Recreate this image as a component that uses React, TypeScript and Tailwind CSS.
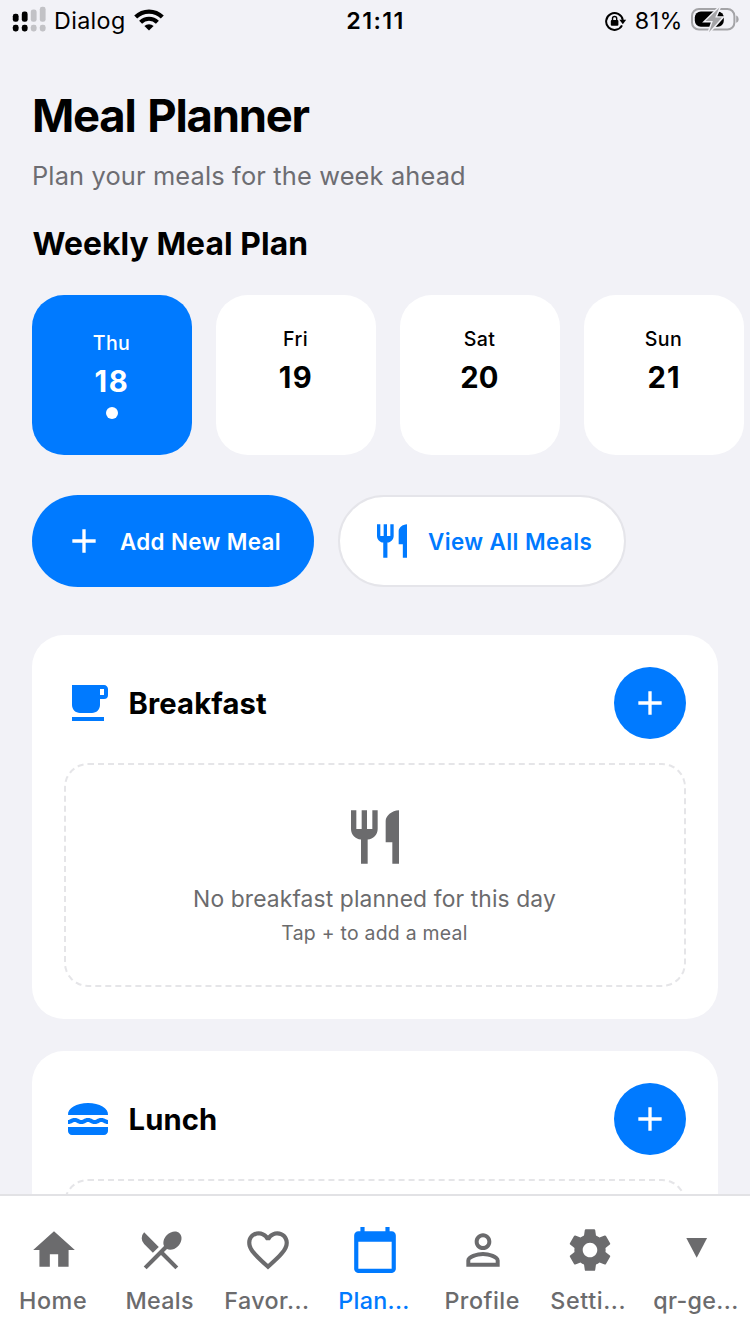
import React from "react";
import {
  MdAdd,
  MdCalendarToday,
  MdFavoriteBorder,
  MdFreeBreakfast,
  MdHome,
  MdLunchDining,
  MdPersonOutline,
  MdRestaurantMenu,
} from "react-icons/md";

function ForkKnife({ className }: { className: string }) {
  return (
    <svg viewBox="0 0 24 24" fill="currentColor" className={className}>
      <path d="M11 9H9V2H7v7H5V2H3v7c0 2.12 1.66 3.84 3.75 3.97V22h2.5v-9.03C11.34 12.84 13 11.12 13 9V2h-2v7zm5-3v8h2.5v8H21V2c-2.76 0-5 2.24-5 4z" />
    </svg>
  );
}

function Gear() {
  return (
    <svg viewBox="0 0 24 24" fill="currentColor" className="ml-0.5 size-[50px]">
      <path d="M19.43 12.98c.04-.32.07-.64.07-.98s-.03-.66-.07-.98l2.11-1.65c.19-.15.24-.42.12-.64l-2-3.46c-.12-.22-.39-.3-.61-.22l-2.49 1c-.52-.4-1.08-.73-1.69-.98l-.38-2.65C14.46 2.18 14.25 2 14 2h-4c-.25 0-.46.18-.49.42l-.38 2.65c-.61.25-1.17.59-1.69.98l-2.49-1c-.23-.09-.49 0-.61.22l-2 3.46c-.13.22-.07.49.12.64l2.11 1.65c-.04.32-.07.65-.07.98s.03.66.07.98l-2.11 1.65c-.19.15-.24.42-.12.64l2 3.46c.12.22.39.3.61.22l2.49-1c.52.4 1.08.73 1.69.98l.38 2.65c.03.24.24.42.49.42h4c.25 0 .46-.18.49-.42l.38-2.65c.61-.25 1.17-.59 1.69-.98l2.49 1c.23.09.49 0 .61-.22l2-3.46c.12-.22.07-.49-.12-.64l-2.11-1.65zM12 15.5c-1.93 0-3.5-1.57-3.5-3.5s1.57-3.5 3.5-3.5 3.5 1.57 3.5 3.5-1.57 3.5-3.5 3.5z" />
    </svg>
  );
}

function SignalIcon() {
  return (
    <svg viewBox="0 0 34 26" className="h-[26px] w-[34px]">
      <g fill="#000">
        <rect x="0.8" y="7.8" width="5.8" height="8" rx="2.4" />
        <rect x="0.8" y="18.8" width="5.8" height="6.6" rx="2.4" />
        <rect x="9.8" y="5.6" width="5.8" height="10.2" rx="2.4" />
        <rect x="9.8" y="18.8" width="5.8" height="6.6" rx="2.4" />
      </g>
      <g fill="#c2c2c6">
        <rect x="18.8" y="3.4" width="5.8" height="12.4" rx="2.4" />
        <rect x="18.8" y="18.8" width="5.8" height="6.6" rx="2.4" />
        <rect x="27.8" y="0.8" width="5.8" height="15" rx="2.4" />
        <rect x="27.8" y="18.8" width="5.8" height="6.6" rx="2.4" />
      </g>
    </svg>
  );
}

function WifiIcon() {
  return (
    <svg viewBox="0 0 30 22" className="h-[22px] w-[30px]" fill="none" stroke="#000" strokeWidth="4.2">
      <path d="M1.7 8a18.9 18.9 0 0 1 26.6 0" />
      <path d="M6.6 13.2a12 12 0 0 1 16.8 0" />
      <path d="M15 21.6l-4.6-4.6a6.6 6.6 0 0 1 9.2 0z" fill="#000" stroke="none" />
    </svg>
  );
}

function RotationLockIcon() {
  return (
    <svg viewBox="0 0 22 22" className="h-[22px] w-[22px]" fill="none" stroke="#000">
      <path d="M17 15.4A8.4 8.4 0 1 1 17.8 10" strokeWidth="2" />
      <path d="M14.4 9.8h6.8l-3.4 4.4z" fill="#000" stroke="none" />
      <rect x="5.8" y="9.9" width="7.6" height="5.8" rx="1" fill="#000" stroke="none" />
      <path d="M7.5 10.4V8.6a2.1 2.1 0 0 1 4.2 0v1.8" strokeWidth="1.4" />
    </svg>
  );
}

function BatteryIcon() {
  return (
    <svg viewBox="0 0 48 26" className="h-[26px] w-[48px] overflow-visible">
      <rect x="1" y="2.9" width="42.4" height="20.6" rx="7" fill="none" stroke="#a4a4a7" strokeWidth="2" />
      <path d="M45.2 9.6c1.6.6 2.4 1.9 2.4 3.6s-.8 3-2.4 3.6z" fill="#a4a4a7" />
      <rect x="3.8" y="5.6" width="29" height="15.2" rx="6" fill="#000" />
      <path d="M28.4 1.6L14.6 15h7.2L18 26.2 31 11.6h-6.8z" fill="#a4a4a7" stroke="#f2f2f7" strokeWidth="2.8" paintOrder="stroke" />
    </svg>
  );
}

function StatusBar() {
  return (
    <header className="grid h-[41px] grid-cols-3 items-center pr-[11px] pl-3 text-[23.3px] leading-[41px]">
      <div className="flex items-center">
        <span className="-mt-[3px]"><SignalIcon /></span>
        <span className="ml-2 tracking-[0.35px]">Dialog</span>
        <span className="-mt-px ml-2"><WifiIcon /></span>
      </div>
      <div className="text-center font-semibold tracking-[1.4px]">21:11</div>
      <div className="flex items-center justify-end">
        <RotationLockIcon />
        <span className="ml-2 tracking-[0.5px]">81%</span>
        <span className="-mt-[3px] ml-2"><BatteryIcon /></span>
      </div>
    </header>
  );
}

const days = [
  { name: "Thu", date: "18", active: true, spacing: "tracking-[1.6px]" },
  { name: "Fri", date: "19", spacing: "tracking-[1.6px]" },
  { name: "Sat", date: "20", spacing: "tracking-[0.1px] -ml-px" },
  { name: "Sun", date: "21", spacing: "tracking-[1px]" },
];

function DayCard({ name, date, active, spacing }: { name: string; date: string; active?: boolean; spacing: string }) {
  return (
    <div
      className={`flex size-40 shrink-0 flex-col items-center rounded-[32px] ${
        active ? "bg-[#007aff] pt-9 text-white" : "bg-white pt-8 text-black"
      }`}
    >
      <span className="-ml-px text-[19.6px] leading-6 font-medium tracking-[0.4px]">{name}</span>
      <span className={`mt-[11px] text-[29.2px] leading-8 font-bold ${spacing}`}>{date}</span>
      {active && <span className="mt-[9px] size-3 rounded-full bg-white" />}
    </div>
  );
}

function MealCard({ title, icon, empty }: { title: string; icon: React.ReactNode; empty?: string }) {
  return (
    <section className="mb-8 rounded-[32px] bg-white p-8">
      <div className="flex h-[72px] items-center">
        <span className="text-[#007aff]">{icon}</span>
        <h3 className="mt-0.5 ml-[16.5px] flex-1 text-[29.2px] leading-9 font-bold tracking-[0.15px]">{title}</h3>
        <button className="flex size-[72px] items-center justify-center rounded-full bg-[#007aff] text-white">
          <MdAdd className="size-10" />
        </button>
      </div>
      <div className="mt-6 flex h-56 flex-col items-center rounded-3xl border-2 border-dashed border-[#e5e5e8] pt-10 text-[#6b6b6d]">
        {empty && (
          <>
            <ForkKnife className="size-16" />
            <p className="mt-[15px] -ml-px text-[22.8px] leading-[30px] tracking-[0.13px]">{empty}</p>
            <p className="mt-[7px] -ml-px text-[19.4px] leading-6 tracking-[0.27px]">Tap + to add a meal</p>
          </>
        )}
      </div>
    </section>
  );
}

function Triangle() {
  return (
    <svg viewBox="0 0 50 50" className="ml-px size-[50px]" fill="currentColor">
      <path d="M14.3 13h20.8L24.7 32.8z" />
    </svg>
  );
}

const tabs = [
  { label: "Home", icon: <MdHome className="size-[50px]" />, text: "tracking-[0.6px] -ml-px" },
  { label: "Meals", icon: <MdRestaurantMenu className="size-[50px]" />, text: "tracking-[0.3px] -ml-0.5" },
  { label: "Favor...", icon: <MdFavoriteBorder className="size-[50px]" />, text: "tracking-[0.4px] -ml-0.5" },
  { label: "Plan...", icon: <MdCalendarToday className="size-[50px]" />, text: "tracking-[0.3px] -ml-0.5", active: true },
  { label: "Profile", icon: <MdPersonOutline className="ml-0.5 size-[50px]" />, text: "tracking-[0.5px]" },
  { label: "Setti...", icon: <Gear />, text: "tracking-[0.6px] -ml-0.5" },
  { label: "qr-ge...", icon: <Triangle />, text: "tracking-[0.35px] -ml-px" },
];

export default function App() {
  return (
    <div className="flex h-[1334px] w-[750px] flex-col overflow-hidden bg-[#f2f2f7] font-[Inter,sans-serif] text-black">
      <StatusBar />
      <main className="min-h-0 flex-1 overflow-hidden px-8 pt-[47px]">
        <h1 className="text-[45.4px] leading-[56px] font-bold tracking-[-1.2px] [word-spacing:2px]">Meal Planner</h1>
        <p className="mt-3.5 text-[25.4px] leading-9 tracking-[0.15px] text-[#6d6d72]">Plan your meals for the week ahead</p>
        <h2 className="mt-7 pt-px pl-[0.5px] text-[31.8px] leading-[42px] font-bold tracking-[0.08px]">Weekly Meal Plan</h2>
        <div className="mt-[30px] flex gap-6">
          {days.map((d) => (
            <DayCard key={d.name} {...d} />
          ))}
        </div>
        <div className="mt-10 mb-12 flex gap-6">
          <button className="flex h-[92px] w-[282px] items-center rounded-full bg-[#007aff] pl-8 text-white">
            <MdAdd className="size-10" />
            <span className="mt-px ml-4 text-[22.4px] font-semibold tracking-[0.35px] whitespace-nowrap">Add New Meal</span>
          </button>
          <button className="flex h-[92px] w-[288px] items-center rounded-full border-2 border-[#e5e5ea] bg-white pl-8 text-[#007aff]">
            <ForkKnife className="size-10" />
            <span className="mt-px ml-4 text-[22.4px] font-semibold tracking-[0.42px] whitespace-nowrap">View All Meals</span>
          </button>
        </div>
        <MealCard title="Breakfast" icon={<MdFreeBreakfast className="size-12" />} empty="No breakfast planned for this day" />
        <MealCard title="Lunch" icon={<MdLunchDining className="size-12" />} />
      </main>
      <nav className="grid h-[140px] shrink-0 grid-cols-7 border-t-2 border-[#e2e2e5] bg-white pt-[29px]">
        {tabs.map((t) => (
          <div key={t.label} className={`flex flex-col items-center ${t.active ? "text-[#007aff]" : "text-[#6b6b6d]"}`}>
            {t.icon}
            <span className={`mt-2.5 text-[23.3px] leading-8 font-medium whitespace-nowrap ${t.text}`}>{t.label}</span>
          </div>
        ))}
      </nav>
    </div>
  );
}
